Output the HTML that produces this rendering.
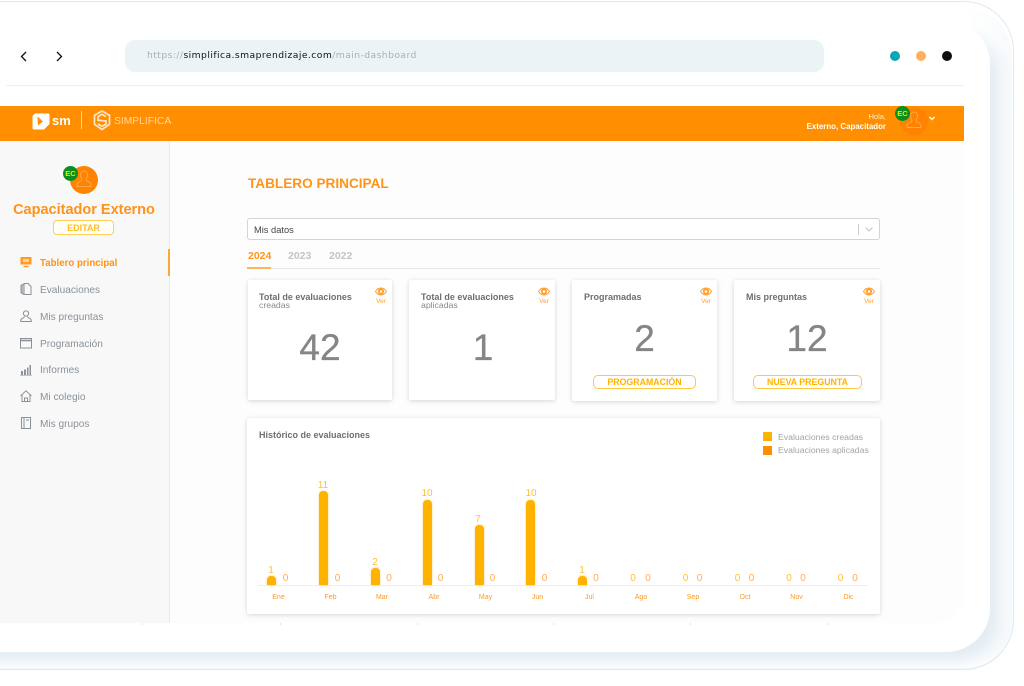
<!DOCTYPE html>
<html lang="es"><head><meta charset="utf-8"><title>Simplifica</title>
<style>
*{box-sizing:border-box}
html,body{margin:0;padding:0}
body{width:1024px;height:686px;position:relative;overflow:hidden;background:#fff;font-family:"Liberation Sans",sans-serif}
.a{position:absolute;white-space:nowrap}
.card{position:absolute;background:#fff;border-radius:2px;box-shadow:0 1px 5px rgba(0,0,0,.16)}
.ttl{left:11px;top:10.500px;font-size:9px;font-weight:bold;color:#6f6f6f;line-height:12px}
.sub{left:11px;top:20px;font-size:8.700px;color:#8a8a8a;line-height:11px}
.num{left:0;width:100%;text-align:center;font-size:37px;color:#858585;line-height:40px;-webkit-text-stroke:.3px #858585}
.ver{position:absolute;right:5px;top:7px;width:12px;text-align:center;font-size:6.500px;color:#ff9f2e;line-height:8px}
.ver svg{display:block;margin:0 auto 2px}
.btn{position:absolute;border:1px solid #ffc93f;border-radius:5px;text-align:center;color:#ffb300;font-weight:bold;font-size:8.800px;line-height:13px;height:14px;background:#fff}
.nav{left:40px;font-size:10.100px;color:#8a919a}
.bar{position:absolute;width:9px;background:#ffb300;border-radius:4px 4px 0 0;box-shadow:0 0 2px rgba(255,179,0,.5)}
.v{position:absolute;font-size:10px;line-height:11px;color:#ffc233;text-align:center;width:16px;margin-top:1px}
.v.o{color:#ffab52}
.m{position:absolute;font-size:7px;line-height:9px;color:#ff9a26;text-align:center;width:30px;top:592.500px}
.ic{position:absolute;left:20px}
.t{position:absolute;top:623px;width:1px;height:2px;background:#e4e4e4}
</style></head><body>
<!-- device frame -->
<div class="a" style="left:-60px;top:1px;width:1074px;height:669px;border:1px solid #dde9f1;border-radius:50px;background:linear-gradient(180deg,#fff 0,#fff 6%,#f8fbfc 100%)"></div>
<div class="a" style="left:-60px;top:8px;width:1072px;height:660px;border-radius:48px;background:linear-gradient(90deg,#fff 0,#fff 96%,#f7fafc 100%)"></div>
<div class="a" style="left:-60px;top:20px;width:1050px;height:632px;box-shadow:12px 12px 14px -2px #e4edf3;border-radius:44px;background:#fff"></div>

<!-- browser bar -->
<svg class="a" style="left:17px;top:50px" width="50" height="13" viewBox="0 0 50 13" fill="none" stroke="#111" stroke-width="1.300"><path d="M9 2 4.500 6.500 9 11"/><path d="M40 2 44.500 6.500 40 11"/></svg>
<div class="a" style="left:125px;top:40px;width:699px;height:32px;border-radius:10px;background:#ebf3f6"></div>
<div class="a" style="left:147px;top:49.500px;font-family:'DejaVu Sans',sans-serif;font-size:9.200px;line-height:12px;color:#a9afb3;letter-spacing:.44px">https://<span style="color:#111">simplifica.smaprendizaje.com</span>/main-dashboard</div>
<div class="a" style="left:890px;top:51px;width:10px;height:10px;border-radius:50%;background:#0ca5b6"></div>
<div class="a" style="left:916px;top:51px;width:10px;height:10px;border-radius:50%;background:#ffb05a"></div>
<div class="a" style="left:942px;top:51px;width:10px;height:10px;border-radius:50%;background:#0f0f0f"></div>
<div class="a" style="left:6px;top:85px;width:958px;height:1px;background:#eef0f1"></div>

<!-- main -->
<div class="a" style="left:0;top:141px;width:964px;height:482px;background:#fdfdfd;border-radius:0 0 28px 0"></div>
<div class="a" style="left:0;top:141px;width:170px;height:482px;background:#f8f8f8;border-right:1px solid #e9e9e9"></div>
<div class="a" style="left:168px;top:249px;width:2px;height:27px;background:#ffa53a"></div>
<i class="t" style="left:142px"></i><i class="t" style="left:280px"></i><i class="t" style="left:417px"></i><i class="t" style="left:553px"></i><i class="t" style="left:690px"></i><i class="t" style="left:827px"></i>

<!-- header -->
<div class="a" style="left:0;top:106px;width:964px;height:35px;background:#ff8f00"></div>
<svg class="a" style="left:32px;top:113px" width="18" height="17" viewBox="0 0 18 17"><path d="M3 .5h13c1 0 1.500.5 1.500 1.500v9L12 16.500H2c-1 0-1.500-.5-1.500-1.500V3z" fill="#fff"/><path d="M5.500 3.500 11 8.500l-5 4z" fill="#ff8f00"/></svg>
<div class="a" style="left:52px;top:112px;font-size:13px;font-weight:bold;color:#fff;line-height:18px">sm</div>
<div class="a" style="left:81px;top:111px;width:1px;height:18px;background:#ffd9a6"></div>
<svg class="a" style="left:93px;top:110px" width="18" height="21" viewBox="0 0 18 21" fill="none" stroke="#ffe7c7" stroke-width="1.700"><path d="M9 1 1.500 5.300v9L9 19.500l7.500-5.200v-9z"/><path d="M13 6.500 9 4.300 5 6.700v3.500l8 .8v3L9 16.300 5 14"/></svg>
<div class="a" style="left:114px;top:113.500px;font-size:10.300px;color:#ffd5a0;line-height:15px">SIMPLIFICA</div>
<div class="a" style="right:138px;top:112px;font-size:7.500px;color:#ffe6cc;line-height:9px;text-align:right">Hola,</div>
<div class="a" style="right:138px;top:121.500px;font-size:7.900px;font-weight:bold;color:#fff;line-height:10px;text-align:right">Externo, Capacitador</div>
<div class="a" style="left:900px;top:107px;width:28px;height:28px;border-radius:50%;background:#ff8200"></div>
<svg class="a" style="left:906px;top:111px" width="16" height="19" viewBox="0 0 16 19" fill="none" stroke="#ffa94a" stroke-width="1"><path d="M8 1c2.300 0 3.500 1.800 3.500 4 0 2-.8 3.300-1.500 4.500 0 1.300 1 1.700 3 2.600 1.400.6 2 1.400 2 2.400v2H1v-2c0-1 .6-1.800 2-2.400 2-.9 3-1.300 3-2.600C5.300 8.300 4.500 7 4.500 5 4.500 2.800 5.700 1 8 1z"/></svg>
<div class="a" style="left:895px;top:106px;width:15px;height:15px;border-radius:50%;background:#0a8f1e;color:#d8f000;font-size:7.500px;font-weight:bold;line-height:15px;text-align:center">EC</div>
<svg class="a" style="left:929px;top:116px" width="6" height="5" viewBox="0 0 6 5" fill="none" stroke="#fff" stroke-width="1.400"><path d="M.5 1 3 3.500 5.500 1"/></svg>

<!-- profile -->
<div class="a" style="left:70px;top:166px;width:28px;height:28px;border-radius:50%;background:#ff8200"></div>
<svg class="a" style="left:76px;top:170px" width="16" height="19" viewBox="0 0 16 19" fill="none" stroke="#ffa94a" stroke-width="1"><path d="M8 1c2.300 0 3.500 1.800 3.500 4 0 2-.8 3.300-1.500 4.500 0 1.300 1 1.700 3 2.600 1.400.6 2 1.400 2 2.400v2H1v-2c0-1 .6-1.800 2-2.400 2-.9 3-1.300 3-2.600C5.300 8.300 4.500 7 4.500 5 4.500 2.800 5.700 1 8 1z"/></svg>
<div class="a" style="left:63px;top:166px;width:15px;height:15px;border-radius:50%;background:#0a8f1e;color:#d8f000;font-size:7.500px;font-weight:bold;line-height:15px;text-align:center">EC</div>
<div class="a" style="left:0;width:168px;text-align:center;top:200.500px;font-size:14.500px;font-weight:bold;color:#ff9219;line-height:18px">Capacitador Externo</div>
<div class="a" style="left:53px;top:220px;width:61px;height:15px;border:1px solid #ffcf57;border-radius:4px;background:#fffef8;color:#ffbf1f;font-size:9px;font-weight:bold;line-height:14px;text-align:center">EDITAR</div>

<!-- nav -->
<svg class="ic" style="top:256px" width="12" height="12" viewBox="0 0 12 12"><path d="M.5 1h11v7.500H.5z" fill="#ff9a26"/><path d="M3 3h6v3H3z" fill="#ffd199"/><path d="M3.500 10.500h5" stroke="#ff9a26" stroke-width="1.500"/></svg>
<div class="a nav" style="top:257px;color:#ff9419;font-weight:bold;font-size:9.700px;line-height:13px">Tablero principal</div>
<svg class="ic" style="top:283px" width="12" height="12" viewBox="0 0 12 12" fill="none" stroke="#8b9198"><path d="M4 .5h4l3 3v8H4z"/><path d="M4 1.500H2.500l-1.500 1v7l1.500 1.500H4" fill="#b4b8bc"/></svg>
<div class="a nav" style="top:284px;line-height:13px">Evaluaciones</div>
<svg class="ic" style="top:310px" width="12" height="12" viewBox="0 0 12 12" fill="none" stroke="#8b9198"><circle cx="6" cy="3.500" r="2.600"/><path d="M4.500 6.500C4.500 8 .7 8.300.7 10.500v1h10.600v-1C11.300 8.300 7.500 8 7.500 6.500"/></svg>
<div class="a nav" style="top:311px;line-height:13px">Mis preguntas</div>
<svg class="ic" style="top:337px" width="12" height="12" viewBox="0 0 12 12" fill="none" stroke="#8b9198"><path d="M.5 1.500h11v9.500H.5z"/><path d="M.5 3.500h11" stroke-width="1.600"/></svg>
<div class="a nav" style="top:338px;line-height:13px">Programación</div>
<svg class="ic" style="top:364px" width="12" height="12" viewBox="0 0 12 12" fill="#8b9198"><path d="M1 7h2v4H1zM4 5.500h2V11H4zM7 3.500h1.500V11H7zM9.500 1H11v10H9.500z"/><path d="M0 11.500h12v.5H0z"/></svg>
<div class="a nav" style="top:364px;line-height:13px">Informes</div>
<svg class="ic" style="top:390px" width="12" height="12" viewBox="0 0 12 12" fill="none" stroke="#8b9198"><path d="M.5 6 6 .8 11.500 6M2 5v6.500h8V5"/><path d="M4.500 11.500V8h3v3.500"/></svg>
<div class="a nav" style="top:391px;line-height:13px">Mi colegio</div>
<svg class="ic" style="top:417px" width="12" height="12" viewBox="0 0 12 12" fill="none" stroke="#8b9198"><path d="M1.500.5h9v11h-9z"/><path d="M4 .5v11M6 3h3"/></svg>
<div class="a nav" style="top:418px;line-height:13px">Mis grupos</div>

<!-- content header -->
<div class="a" style="left:248px;top:175px;font-size:13.600px;font-weight:bold;color:#ff9419;line-height:17px">TABLERO PRINCIPAL</div>
<div class="a" style="left:247px;top:218px;width:633px;height:22px;background:#fff;border:1px solid #d4d4d4;border-radius:3px"></div>
<div class="a" style="left:254px;top:223.500px;font-size:9.300px;line-height:12px;color:#444">Mis datos</div>
<div class="a" style="left:858px;top:224px;width:1px;height:11px;background:#ccc"></div>
<svg class="a" style="left:865px;top:227px" width="8" height="5" viewBox="0 0 8 5" fill="none" stroke="#c4c4c4"><path d="M.5.500 4 4 7.500.500"/></svg>
<div class="a" style="left:248px;top:249.500px;font-size:10.500px;font-weight:bold;color:#ff9419;line-height:13px">2024</div>
<div class="a" style="left:288px;top:249.500px;font-size:10.500px;font-weight:bold;color:#c4c4c4;line-height:13px">2023</div>
<div class="a" style="left:329px;top:249.500px;font-size:10.500px;font-weight:bold;color:#c4c4c4;line-height:13px">2022</div>
<div class="a" style="left:247px;top:268px;width:633px;height:1px;background:#e6e6e6"></div>
<div class="a" style="left:247px;top:267px;width:24px;height:2px;background:#ffb35a"></div>

<!-- cards -->
<div class="card" style="left:248px;top:280px;width:144px;height:120px">
<div class="a ttl">Total de evaluaciones</div><div class="a sub">creadas</div>
<div class="a num" style="top:48px">42</div>
<div class="ver"><svg width="12" height="9" viewBox="0 0 12 9" fill="none" stroke="#ff9f2e"><path d="M.5 4.500C2 2 4 1 6 1s4 1 5.500 3.500C10 7 8 8 6 8S2 7 .5 4.500z"/><circle cx="6" cy="4.500" r="2.200" stroke-width="1.800"/></svg>Ver</div></div>
<div class="card" style="left:409px;top:280px;width:146px;height:120px">
<div class="a ttl" style="left:12px">Total de evaluaciones</div><div class="a sub" style="left:12px">aplicadas</div>
<div class="a num" style="top:48px;left:1px">1</div>
<div class="ver"><svg width="12" height="9" viewBox="0 0 12 9" fill="none" stroke="#ff9f2e"><path d="M.5 4.500C2 2 4 1 6 1s4 1 5.500 3.500C10 7 8 8 6 8S2 7 .5 4.500z"/><circle cx="6" cy="4.500" r="2.200" stroke-width="1.800"/></svg>Ver</div></div>
<div class="card" style="left:572px;top:280px;width:145px;height:121px">
<div class="a ttl" style="left:12px">Programadas</div>
<div class="a num" style="top:39px">2</div>
<div class="ver"><svg width="12" height="9" viewBox="0 0 12 9" fill="none" stroke="#ff9f2e"><path d="M.5 4.500C2 2 4 1 6 1s4 1 5.500 3.500C10 7 8 8 6 8S2 7 .5 4.500z"/><circle cx="6" cy="4.500" r="2.200" stroke-width="1.800"/></svg>Ver</div>
<div class="btn" style="left:21px;top:95px;width:103px">PROGRAMACIÓN</div></div>
<div class="card" style="left:734px;top:280px;width:146px;height:121px">
<div class="a ttl" style="left:12px">Mis preguntas</div>
<div class="a num" style="top:39px">12</div>
<div class="ver"><svg width="12" height="9" viewBox="0 0 12 9" fill="none" stroke="#ff9f2e"><path d="M.5 4.500C2 2 4 1 6 1s4 1 5.500 3.500C10 7 8 8 6 8S2 7 .5 4.500z"/><circle cx="6" cy="4.500" r="2.200" stroke-width="1.800"/></svg>Ver</div>
<div class="btn" style="left:19px;top:95px;width:109px">NUEVA PREGUNTA</div></div>

<!-- chart -->
<div class="card" style="left:247px;top:418px;width:633px;height:196px"></div>
<div class="a" style="left:259px;top:428.500px;font-size:9px;font-weight:bold;color:#6f6f6f;line-height:13px">Histórico de evaluaciones</div>
<div class="a" style="left:763px;top:432px;width:9px;height:9px;background:#ffb300"></div>
<div class="a" style="left:763px;top:446px;width:9px;height:9px;background:#ff8f00"></div>
<div class="a" style="left:778px;top:430.500px;font-size:8.700px;color:#a3a3a3;line-height:13px">Evaluaciones creadas</div>
<div class="a" style="left:778px;top:444px;font-size:8.700px;color:#a3a3a3;line-height:13px">Evaluaciones aplicadas</div>
<div class="a" style="left:258px;top:585px;width:610px;height:1px;background:#eee"></div>

<div class="bar" style="left:267px;top:576px;height:9px"></div>
<div class="bar" style="left:319px;top:491px;height:94px"></div>
<div class="bar" style="left:370.500px;top:568px;height:17px"></div>
<div class="bar" style="left:422.500px;top:500px;height:85px"></div>
<div class="bar" style="left:474.500px;top:525px;height:60px"></div>
<div class="bar" style="left:526px;top:500px;height:85px"></div>
<div class="bar" style="left:578px;top:576px;height:9px"></div>

<div class="v" style="left:263px;top:564px">1</div><div class="v o" style="left:277.500px;top:572px">0</div>
<div class="v" style="left:315px;top:479px">11</div><div class="v o" style="left:329.500px;top:572px">0</div>
<div class="v" style="left:367px;top:556px">2</div><div class="v o" style="left:381px;top:572px">0</div>
<div class="v" style="left:419px;top:487px">10</div><div class="v o" style="left:432.500px;top:572px">0</div>
<div class="v" style="left:470px;top:513px">7</div><div class="v o" style="left:484.500px;top:572px">0</div>
<div class="v" style="left:523px;top:487px">10</div><div class="v o" style="left:536.500px;top:572px">0</div>
<div class="v" style="left:574px;top:564px">1</div><div class="v o" style="left:588px;top:572px">0</div>
<div class="v" style="left:625px;top:572px">0</div><div class="v o" style="left:640px;top:572px">0</div>
<div class="v" style="left:677.500px;top:572px">0</div><div class="v o" style="left:691.500px;top:572px">0</div>
<div class="v" style="left:729.500px;top:572px">0</div><div class="v o" style="left:743.500px;top:572px">0</div>
<div class="v" style="left:781px;top:572px">0</div><div class="v o" style="left:795px;top:572px">0</div>
<div class="v" style="left:832.500px;top:572px">0</div><div class="v o" style="left:847px;top:572px">0</div>

<div class="m" style="left:263.500px">Ene</div><div class="m" style="left:315.500px">Feb</div><div class="m" style="left:367px">Mar</div><div class="m" style="left:419px">Abr</div><div class="m" style="left:470.500px">May</div><div class="m" style="left:522.500px">Jun</div><div class="m" style="left:574.500px">Jul</div><div class="m" style="left:626px">Ago</div><div class="m" style="left:678px">Sep</div><div class="m" style="left:730px">Oct</div><div class="m" style="left:781.500px">Nov</div><div class="m" style="left:833.500px">Dic</div>
</body></html>
